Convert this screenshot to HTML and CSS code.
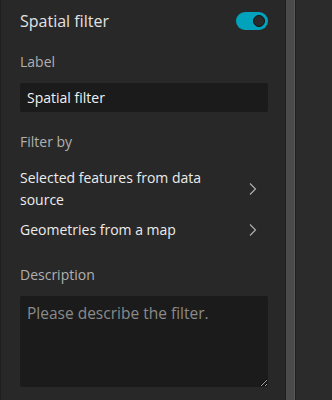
FILE: index.html
```html
<!DOCTYPE html>
<html lang="en">
<head>
    <meta charset="UTF-8">
    <meta name="viewport" content="width=device-width, initial-scale=1.0">
    <title>Spatial filter</title>
    <link rel="stylesheet" href="styles.css">
</head>
<body>
    <div class="panel">
        <div class="header">
            <span class="title">Spatial filter</span>
            <span class="switch"><span class="knob"></span></span>
        </div>
        <div class="form-group">
            <div class="label">Label</div>
            <input class="text-input" type="text" value="Spatial filter">
        </div>
        <div class="form-group">
            <div class="label">Filter by</div>
            <div class="option">
                <span>Selected features from data source</span>
                <svg class="chevron" width="8" height="14" viewBox="0 0 8 14"><path d="M1 1.5l5.5 5.5-5.5 5.5" fill="none" stroke="#b4b4b4" stroke-width="1.1"/></svg>
            </div>
            <div class="option">
                <span>Geometries from a map</span>
                <svg class="chevron" width="8" height="14" viewBox="0 0 8 14"><path d="M1 1.5l5.5 5.5-5.5 5.5" fill="none" stroke="#b4b4b4" stroke-width="1.1"/></svg>
            </div>
        </div>
        <div class="form-group">
            <div class="label">Description</div>
            <textarea class="text-area" placeholder="Please describe the filter."></textarea>
        </div>
    </div>
    <div class="divider"></div>
    <div class="main"></div>
</body>
</html>
```

FILE: styles.css
```css
body {
    margin: 0;
    padding: 0;
    height: 400px;
    overflow: hidden;
    display: flex;
    background-color: #2b2b2b;
    font-family: "Open Sans", Lato, sans-serif;
    color: #e8e8e8;
}
.panel {
    width: 248px;
    padding: 0 17px 0 19px;
    border-left: 1px solid #1e1e1e;
    background-color: #282828;
    flex-shrink: 0;
}
.header {
    display: flex;
    align-items: center;
    justify-content: space-between;
    height: 22px;
    margin-top: 10px;
}
.title {
    font-size: 16px;
    line-height: 22px;
    color: #e2e2e2;
}
.switch {
    position: relative;
    width: 32px;
    height: 18px;
    border-radius: 9px;
    background-color: #00a3bb;
}
.knob {
    position: absolute;
    right: 3px;
    top: 3px;
    width: 10px;
    height: 10px;
    border-radius: 50%;
    border: 1px solid #111;
    background-color: #2a2a2a;
}
.form-group {
    margin-top: 20px;
}
.label {
    font-size: 14px;
    line-height: 20px;
    color: #b0b0b0;
    margin-bottom: 11px;
}
.text-input {
    display: block;
    width: 100%;
    height: 29px;
    box-sizing: border-box;
    border: none;
    border-radius: 2px;
    background-color: #1b1b1b;
    color: #f2f2f2;
    font-family: inherit;
    font-size: 14px;
    padding: 0 7px;
    outline: none;
}
.option {
    display: flex;
    align-items: center;
    justify-content: space-between;
    padding: 4px 0;
    font-size: 14px;
    line-height: 22px;
    color: #ececec;
}
.option span {
    width: 200px;
}
.chevron {
    margin-right: 11px;
}
.text-area {
    display: block;
    width: 100%;
    height: 91px;
    box-sizing: border-box;
    border: none;
    border-radius: 2px;
    background-color: #1b1b1b;
    color: #f0f0f0;
    font-family: inherit;
    font-size: 15.5px;
    line-height: 20px;
    padding: 7px 7px;
    outline: none;
    resize: vertical;
}
.text-area::placeholder {
    color: #8a8a8a;
}
.divider {
    width: 8px;
    flex-shrink: 0;
    background-color: #4a4a4a;
    border-left: 1px solid #1f1f1f;
    border-right: 1px solid #5a5a5a;
    box-shadow: 1px 0 0 #1f1f1f;
}
.main {
    flex: 1;
    margin-left: 1px;
    background-color: #2b2b2b;
}
```
